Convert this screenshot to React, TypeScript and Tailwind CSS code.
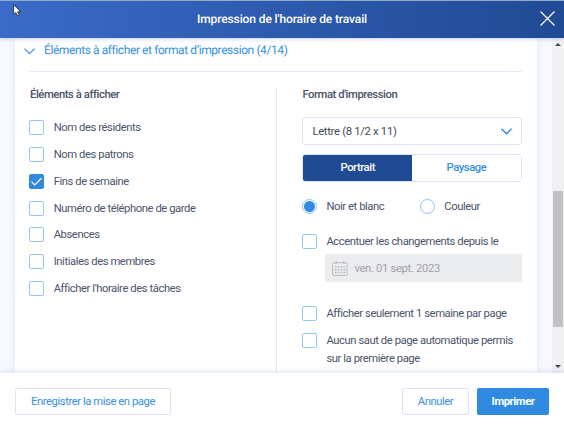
import { useState } from 'react'
import clsx from 'clsx'

const elements = [
  'Nom des résidents',
  'Nom des patrons',
  'Fins de semaine',
  'Numéro de téléphone de garde',
  'Absences',
  'Initiales des membres',
  "Afficher l'horaire des tâches",
]

type CheckboxProps = { label: string; checked: boolean; onChange: () => void; className?: string }

function Checkbox({ label, checked, onChange, className }: CheckboxProps) {
  return (
    <button
      role="checkbox"
      aria-checked={checked}
      onClick={onChange}
      className={clsx('flex w-full items-start text-left leading-[17.6px] text-[#4b556b]', className)}
    >
      <span
        className={clsx(
          'mr-[9px] flex size-[15px] shrink-0 items-center justify-center rounded-[2px] border',
          checked ? 'border-[#2f8ae0] bg-[#2f8ae0]' : 'border-[#96c7f4] bg-white',
        )}
      >
        {checked && (
          <svg width="13" height="13" viewBox="0 0 13 13" fill="none" stroke="white" strokeWidth="1.2">
            <path d="M1.5 6.7l3.2 3.2 6.8-6.6" />
          </svg>
        )}
      </span>
      <span className="-mt-px flex-1">{label}</span>
    </button>
  )
}

function Radio({ label, checked, onChange }: { label: string; checked: boolean; onChange: () => void }) {
  return (
    <button role="radio" aria-checked={checked} onClick={onChange} className="flex items-center leading-[15px] text-[#4b556b]">
      <span className="mr-[9px] flex size-[15px] items-center justify-center rounded-full border border-[#8fc3f2]">
        {checked && <span className="size-[11px] rounded-full bg-[#2f8ae0]" />}
      </span>
      {label}
    </button>
  )
}

function CalendarIcon() {
  return (
    <svg className="-mt-px" width="16" height="16" viewBox="0 0 16 16" fill="none" stroke="#b4b6ba">
      <rect x="0.6" y="1.8" width="14.5" height="12.7" rx="1.5" strokeWidth="0.9" />
      <path d="M4 0v3M11.8 0v3" strokeWidth="1" />
      <path d="M3 6h10M3 8.8h10M3 11.5h10" strokeWidth="1.4" strokeDasharray="1.5 1.33" />
    </svg>
  )
}

export default function App() {
  const [selected, setSelected] = useState(['Fins de semaine'])
  const [orientation, setOrientation] = useState('Portrait')
  const [color, setColor] = useState('Noir et blanc')
  const [options, setOptions] = useState({ highlight: false, oneWeek: false, noBreak: false })

  const toggle = (label: string) =>
    setSelected((list) => (list.includes(label) ? list.filter((item) => item !== label) : [...list, label]))

  return (
    <div className="flex h-[429px] w-[564px] flex-col overflow-hidden bg-white font-['Roboto',sans-serif] text-[11.25px] tracking-[-0.43px] [text-rendering:geometricPrecision]">
      <header className="relative z-10 flex h-[38px] shrink-0 items-center justify-center border-t border-[#8eabc9] bg-linear-to-r from-[#3b6bc8] to-[#204a93] shadow-[0_1px_4px_rgba(59,107,200,0.3)]">
        <h1 className="pb-[2px] text-[12px] font-medium tracking-[-0.11px] text-white">Impression de l'horaire de travail</h1>
        <button aria-label="Fermer" className="absolute top-[10px] right-[9px]">
          <svg width="15" height="15" viewBox="0 0 15 15" stroke="white" strokeWidth="1.2">
            <path d="M0.5 0.5l14 14M14.5 0.5l-14 14" />
          </svg>
        </button>
        <svg className="absolute top-[3px] left-[13px]" width="9" height="13" viewBox="0 0 9 13">
          <path d="M0.7 0.8v9.6l2.2-2 1.6 3.6 1.8-.8-1.6-3.5h3z" fill="white" stroke="#1b2238" strokeWidth="0.8" />
        </svg>
      </header>

      <main className="flex h-[335px] shrink-0 overflow-hidden bg-[#f7f9fd]">
        <section className="ml-[15px] w-[522px] bg-white pr-[15px] pl-[14px] shadow-[0_0_7px_rgba(90,135,225,0.17)]">
          <h2 className="flex h-[34px] items-center border-b border-[#e6ebf7] pb-[9px] text-[12px] tracking-[-0.41px] text-[#3790e2]">
            <svg className="mt-[3px] mr-[9px] -ml-[5px]" width="11" height="7" viewBox="0 0 11 7" fill="none" stroke="#3790e2" strokeWidth="1.2">
              <path d="M0.5 0.7l5 5 5-5" />
            </svg>
            Éléments à afficher et format d’impression (4/14)
          </h2>
          <div className="mt-[15px] flex h-[300px]">
            <div className="w-[248px] border-r border-[#e3e9f7] pl-px">
              <h3 className="font-medium leading-[15px] text-[#4a5368]">Éléments à afficher</h3>
              <div className="mt-[18px] -ml-px flex flex-col gap-[11.85px]">
                {elements.map((label) => (
                  <Checkbox key={label} label={label} checked={selected.includes(label)} onChange={() => toggle(label)} className="h-[15px] whitespace-nowrap [&>span:last-child]:pl-[0.7px]" />
                ))}
              </div>
            </div>
            <div className="ml-[25.4px] w-[219.4px]">
              <h3 className="font-medium leading-[15px] text-[#4a5368]">Format d'impression</h3>
              <button className="mt-[15px] flex h-7 w-full items-center justify-between rounded-[3px] border border-[#dce5f8] px-[9px] pt-[2px] tracking-[-0.3px] text-[#444b58]">
                Lettre (8 1/2 x 11)
                <svg className="-mt-[2px]" width="11" height="7" viewBox="0 0 11 7" fill="none" stroke="#2f8ae0" strokeWidth="1.5">
                  <path d="M0.5 0.7l5 5 5-5" />
                </svg>
              </button>
              <div className="mt-[9px] flex h-7 overflow-hidden rounded-[3px] border border-[#dce5f8]">
                {['Portrait', 'Paysage'].map((name) => (
                  <button
                    key={name}
                    onClick={() => setOrientation(name)}
                    className={clsx('flex-1 font-medium', orientation === name ? 'bg-[#204a93] text-white' : 'bg-white text-[#3790e2]')}
                  >
                    {name}
                  </button>
                ))}
              </div>
              <div className="mt-[17px] flex gap-[36px]">
                {['Noir et blanc', 'Couleur'].map((name) => (
                  <Radio key={name} label={name} checked={color === name} onChange={() => setColor(name)} />
                ))}
              </div>
              <Checkbox
                label="Accentuer les changements depuis le"
                checked={options.highlight}
                onChange={() => setOptions({ ...options, highlight: !options.highlight })}
                className="mt-[19.5px] h-[15px] whitespace-nowrap"
              />
              <div className="mt-[5.5px] ml-[23px] flex h-7 items-center gap-[6px] rounded-[2px] bg-[#ebecee] pt-[2px] pl-[7px] tracking-[-0.33px] text-[#a0a2a6]">
                <CalendarIcon />
                ven. 01 sept. 2023
              </div>
              <Checkbox
                label="Afficher seulement 1 semaine par page"
                checked={options.oneWeek}
                onChange={() => setOptions({ ...options, oneWeek: !options.oneWeek })}
                className="mt-6 h-[15px] whitespace-nowrap"
              />
              <Checkbox
                label="Aucun saut de page automatique permis sur la première page"
                checked={options.noBreak}
                onChange={() => setOptions({ ...options, noBreak: !options.noBreak })}
                className="mt-3"
              />
            </div>
          </div>
        </section>
        <div className="ml-auto flex w-3 flex-col items-center bg-[#f1f1f1] pt-[5px] pb-[5px]">
          <svg width="6" height="3" viewBox="0 0 6 3" fill="#444"><path d="M0 3l3-3 3 3z" /></svg>
          <div className="mt-[145px] h-[136px] w-[10px] bg-[#c1c1c1]" />
          <svg className="mt-auto" width="6" height="3" viewBox="0 0 6 3" fill="#444"><path d="M0 0l3 3 3-3z" /></svg>
        </div>
      </main>

      <footer className="relative z-10 flex h-14 shrink-0 items-center bg-white px-[15px] text-[#3790e2] shadow-[0_0_7px_rgba(90,135,225,0.28)]">
        <button className="h-[27px] w-[156px] rounded-[2px] border border-[#dce5f8] pt-[2px]">Enregistrer la mise en page</button>
        <button className="ml-auto h-[27px] w-[67px] rounded-[2px] border border-[#dce5f8] pt-[2px]">Annuler</button>
        <button className="ml-2 h-[27px] w-[72px] rounded-[2px] bg-[#2f8ae0] pt-[2px] font-bold text-white">Imprimer</button>
      </footer>
    </div>
  )
}
